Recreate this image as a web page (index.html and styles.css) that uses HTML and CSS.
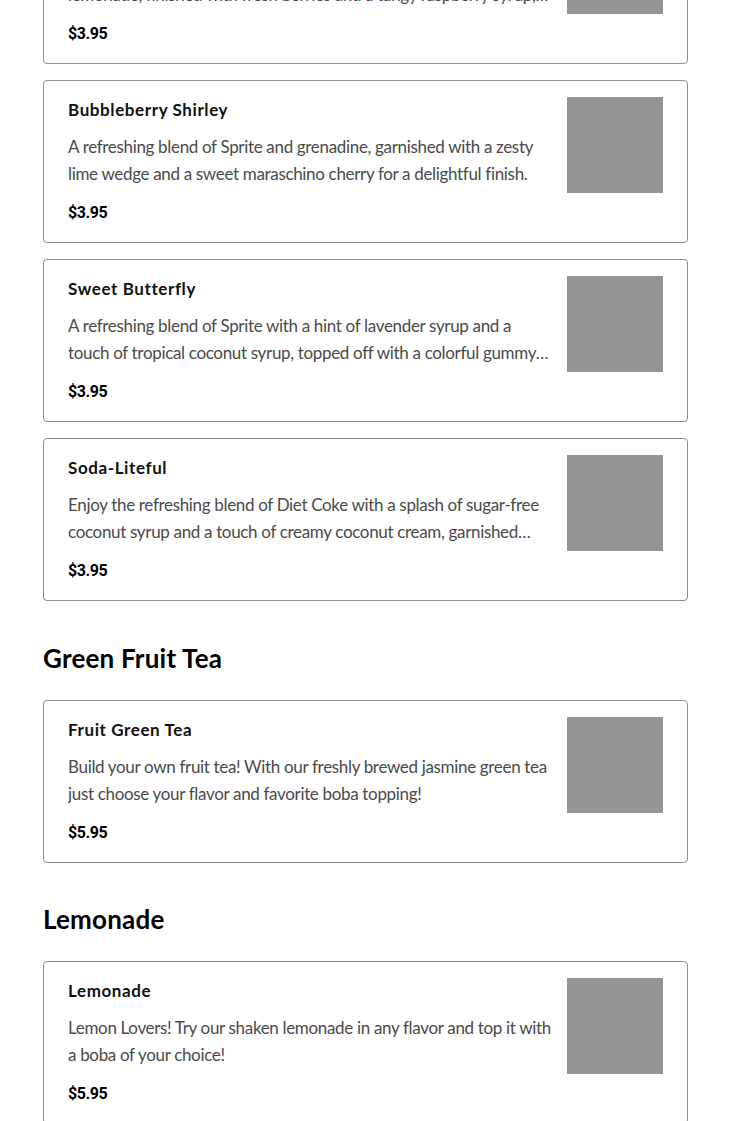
FILE: index.html
```html
<!DOCTYPE html>
<html lang="en">
<head>
<meta charset="utf-8">
<title>Menu</title>
<link rel="stylesheet" href="styles.css">
</head>
<body>
<main class="menu">
  <section class="section">
    <div class="items">
      <article class="card">
        <div class="info">
          <h3 class="name">Razzle Dazzle</h3>
          <p class="desc">A fizzy blend of Sprite and raspberry syrup with a splash of lemonade, finished with fresh berries and a tangy raspberry syrup, the perfect berry burst for a sunny afternoon treat.</p>
          <div class="price">$3.95</div>
        </div>
        <div class="thumb"></div>
      </article>
      <article class="card">
        <div class="info">
          <h3 class="name">Bubbleberry Shirley</h3>
          <p class="desc">A refreshing blend of Sprite and grenadine, garnished with a zesty lime wedge and a sweet maraschino cherry for a delightful finish.</p>
          <div class="price">$3.95</div>
        </div>
        <div class="thumb"></div>
      </article>
      <article class="card">
        <div class="info">
          <h3 class="name">Sweet Butterfly</h3>
          <p class="desc">A refreshing blend of Sprite with a hint of lavender syrup and a touch of tropical coconut syrup, topped off with a colorful gummy butterfly for a whimsical finish.</p>
          <div class="price">$3.95</div>
        </div>
        <div class="thumb"></div>
      </article>
      <article class="card">
        <div class="info">
          <h3 class="name">Soda-Liteful</h3>
          <p class="desc">Enjoy the refreshing blend of Diet Coke with a splash of sugar-free coconut syrup and a touch of creamy coconut cream, garnished with a fresh lime wedge.</p>
          <div class="price">$3.95</div>
        </div>
        <div class="thumb"></div>
      </article>
    </div>
  </section>

  <section class="section">
    <h2 class="section-title">Green Fruit Tea</h2>
    <div class="items">
      <article class="card">
        <div class="info">
          <h3 class="name">Fruit Green Tea</h3>
          <p class="desc">Build your own fruit tea! With our freshly brewed jasmine green tea just choose your flavor and favorite boba topping!</p>
          <div class="price">$5.95</div>
        </div>
        <div class="thumb"></div>
      </article>
    </div>
  </section>

  <section class="section">
    <h2 class="section-title">Lemonade</h2>
    <div class="items">
      <article class="card">
        <div class="info">
          <h3 class="name">Lemonade</h3>
          <p class="desc">Lemon Lovers! Try our shaken lemonade in any flavor and top it with a boba of your choice!</p>
          <div class="price">$5.95</div>
        </div>
        <div class="thumb"></div>
      </article>
    </div>
  </section>
</main>
</body>
</html>
```

FILE: styles.css
```css
html, body {
  margin: 0;
  padding: 0;
  background: #ffffff;
}

body {
  font-family: "Lato", "Liberation Sans", sans-serif;
  color: #000;
}

.menu {
  width: 645px;
  margin: -99px 0 0 43px;
}

.section-title {
  margin: 42px 0 27px;
  font-family: "Lato", "Noto Sans", sans-serif;
  font-weight: 700;
  font-size: 26px;
  line-height: 30px;
  letter-spacing: 0.2px;
  color: #000;
}

.section:last-child .section-title {
  margin-top: 41px;
}

.items {
  display: flex;
  flex-direction: column;
  gap: 16px;
}

.card {
  display: flex;
  gap: 16px;
  align-items: flex-start;
  border: 1px solid #8c8c8c;
  border-radius: 4px;
  padding: 16px 24px 17px 24px;
  box-sizing: border-box;
  height: 163px;
}

.info {
  flex: 1;
  min-width: 0;
}

.name {
  margin: 0 0 11px;
  font-family: "Lato", "Noto Sans", sans-serif;
  font-weight: 700;
  font-size: 17px;
  line-height: 26px;
  letter-spacing: 0.6px;
  color: #111;
}

.desc {
  margin: 0 0 14px;
  font-family: "Lato", sans-serif;
  font-size: 17px;
  line-height: 26.5px;
  letter-spacing: -0.33px;
  color: #4a4a4a;
  display: -webkit-box;
  -webkit-line-clamp: 2;
  -webkit-box-orient: vertical;
  overflow: hidden;
}

.price {
  font-family: "Roboto", "Liberation Sans", sans-serif;
  font-weight: 700;
  font-size: 16px;
  line-height: 24px;
  letter-spacing: -0.4px;
  color: #000;
}

.thumb {
  flex: 0 0 96px;
  width: 96px;
  height: 96px;
  background: #959595;
}
```
